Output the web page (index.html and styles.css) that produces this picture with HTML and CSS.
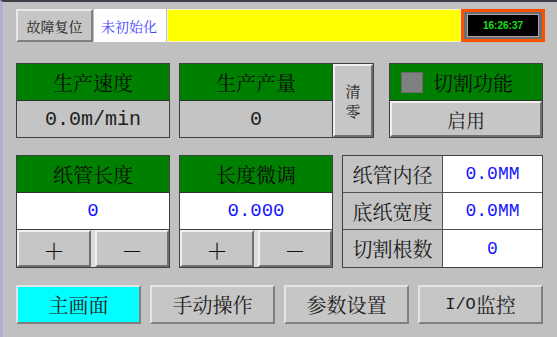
FILE: index.html
```html
<!DOCTYPE html>
<html lang="zh-CN">
<head>
    <meta charset="UTF-8">
    <title>主画面</title>
    <link rel="stylesheet" href="styles.css">
</head>
<body>
    <div class="screen">
        <!-- Barre du haut -->
        <div class="topbar">
            <div class="btn reset">故障复位</div>
            <div class="status">未初始化</div>
            <div class="alarm"></div>
            <div class="clock"><div class="clock-face">16:26:37</div></div>
        </div>

        <!-- Vitesse / production / coupe -->
        <div class="row row-top">
            <div class="panel">
                <div class="head">生产速度</div>
                <div class="value mono">0.0m/min</div>
            </div>
            <div class="group">
                <div class="panel inner">
                    <div class="head">生产产量</div>
                    <div class="value mono">0</div>
                </div>
                <div class="btn clear"><span>清</span><span>零</span></div>
            </div>
            <div class="panel cut">
                <div class="head head-cut"><span class="check"></span>切割功能</div>
                <div class="btn enable">启用</div>
            </div>
        </div>

        <!-- Longueurs et tableau -->
        <div class="row row-mid">
            <div class="panel">
                <div class="head">纸管长度</div>
                <div class="value entry">0</div>
                <div class="steps">
                    <div class="btn step">＋</div>
                    <div class="btn step">－</div>
                </div>
            </div>
            <div class="panel">
                <div class="head">长度微调</div>
                <div class="value entry">0.000</div>
                <div class="steps">
                    <div class="btn step">＋</div>
                    <div class="btn step">－</div>
                </div>
            </div>
            <div class="table">
                <div class="cell label">纸管内径</div>
                <div class="cell data">0.0MM</div>
                <div class="cell label">底纸宽度</div>
                <div class="cell data">0.0MM</div>
                <div class="cell label">切割根数</div>
                <div class="cell data">0</div>
            </div>
        </div>

        <!-- Navigation -->
        <div class="row nav">
            <div class="btn nav-btn active">主画面</div>
            <div class="btn nav-btn">手动操作</div>
            <div class="btn nav-btn">参数设置</div>
            <div class="btn nav-btn"><span class="latin">I/O</span>监控</div>
        </div>
    </div>
</body>
</html>
```

FILE: styles.css
```css
* {
    margin: 0;
    padding: 0;
    box-sizing: border-box;
}

body {
    background: #c0c0c0;
    font-family: "Noto Serif CJK SC", "Noto Sans CJK SC", serif;
    color: #1a1a1a;
}

.screen {
    width: 557px;
    height: 337px;
    background: #c0c0c0;
    border-left: 3px solid #aeaed6;
    border-top: 2px solid #3c3c48;
    padding: 7px 0 0 13px;
}

.mono {
    font-family: "Liberation Mono", monospace;
}

/* Boutons en relief */
.btn {
    display: flex;
    align-items: center;
    justify-content: center;
    background: #c6c6c6;
    border: 2px solid;
    border-color: #f0f0f0 #707070 #707070 #f0f0f0;
}

/* Barre du haut */
.topbar {
    display: flex;
    height: 33px;
}

.reset {
    width: 77px;
    font-size: 14px;
    color: #202020;
    border-color: #e8e8e8 #808080 #808080 #e8e8e8;
}

.status {
    width: 72px;
    margin-left: 1px;
    background: #fff;
    color: #4646ff;
    font-size: 14px;
    display: flex;
    align-items: center;
    padding-left: 7px;
}

.alarm {
    width: 294px;
    margin-left: 1px;
    background: #ffff00;
    border: 1px solid #f4f4c8;
}

.clock {
    width: 84px;
    border: 3px solid #ff5000;
    background: #6e6e6e;
    padding: 2px 3px;
}

.clock-face {
    height: 100%;
    background: #000;
    border: 1px solid #a8a8a8;
    color: #18e018;
    font-family: "Liberation Sans", sans-serif;
    font-weight: bold;
    font-size: 10px;
    display: flex;
    align-items: center;
    justify-content: center;
}

/* Rangées */
.row {
    display: flex;
}

.row-top {
    height: 75px;
    margin-top: 21px;
}

.row-mid {
    height: 113px;
    margin-top: 17px;
}

.panel {
    width: 154px;
    border: 1px solid #404040;
    display: flex;
    flex-direction: column;
}

.row .panel + .panel,
.row .panel + .group,
.row .panel + .table {
    margin-left: 9px;
}

.head {
    height: 37px;
    flex: none;
    background: #008000;
    border-bottom: 1px solid #303030;
    color: #0a0a0a;
    font-size: 20px;
    display: flex;
    align-items: center;
    justify-content: center;
}

.value {
    flex: 1;
    display: flex;
    align-items: center;
    justify-content: center;
    font-size: 20px;
    color: #202020;
    background: #c4c4c4;
}

.group {
    width: 195px;
    display: flex;
    border: 1px solid #404040;
}

.group .inner {
    width: 153px;
    border: none;
    border-right: 1px solid #404040;
}

.clear {
    flex: 1;
    flex-direction: column;
    font-size: 15px;
    line-height: 20px;
    color: #202020;
}

.cut {
    margin-left: 15px !important;
}

.head-cut {
    justify-content: flex-start;
    padding-left: 11px;
    gap: 10px;
}

.check {
    width: 22px;
    height: 21px;
    background: #808080;
    border: 1px solid #6a6a6a;
}

.enable {
    flex: 1;
    font-size: 19px;
    color: #202020;
}

.entry {
    height: 37px;
    flex: none;
    background: #fff;
    border-bottom: 1px solid #404040;
    color: #1414ff;
    font-family: "Liberation Mono", monospace;
    font-size: 19px;
}

.steps {
    flex: 1;
    display: flex;
    gap: 4px;
    background: #dcdcdc;
}

.step {
    flex: 1;
    font-family: "Noto Sans CJK SC", sans-serif;
    font-size: 22px;
    font-weight: 300;
    color: #101010;
}

/* Tableau */
.table {
    width: 201px;
    border: 1px solid #404040;
    display: grid;
    grid-template-columns: 100px 1fr;
    grid-template-rows: repeat(3, 1fr);
}

.cell {
    display: flex;
    align-items: center;
    justify-content: center;
    border-bottom: 1px solid #505050;
}

.cell:nth-last-child(-n+2) {
    border-bottom: none;
}

.label {
    background: #c4c4c4;
    border-right: 1px solid #505050;
    font-size: 20px;
    color: #1a1a1a;
}

.data {
    background: #fff;
    color: #1414ff;
    font-family: "Liberation Mono", monospace;
    font-size: 18px;
}

/* Navigation */
.nav {
    height: 39px;
    margin-top: 17px;
    gap: 9px;
}

.nav-btn {
    width: 125px;
    font-size: 20px;
    color: #202020;
    border-color: #e4e4e4 #808080 #808080 #e4e4e4;
}

.nav-btn.active {
    background: #00ffff;
}

.latin {
    font-family: "Liberation Mono", monospace;
    font-size: 17px;
}
```
